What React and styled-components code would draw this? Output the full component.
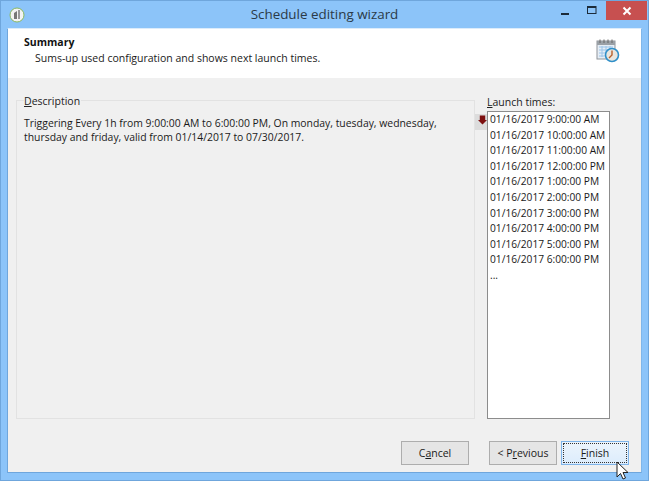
import React from "react";
import styled, { createGlobalStyle } from "styled-components";

const Global = createGlobalStyle`
  html, body { margin: 0; padding: 0; background: #fff; }
  body { width: 669px; height: 501px; overflow: hidden; font-family: "Open Sans", "Noto Sans", sans-serif; }
`;
const Win = styled.div`
  box-sizing: border-box; width: 649px; height: 481px; background: #8cc4f9;
  border: 1px solid #6fa6dc; display: flex; flex-direction: column; padding: 0 6px 7px 6px;
`;
const TitleBar = styled.div`
  height: 27px; flex: none; display: flex; align-items: flex-start; position: relative; margin: 0 -5px 0 0;
`;
const AppIcon = styled.svg`
  width: 16px; height: 16px; margin: 6px 0 0 2px; flex: none;
`;
const Title = styled.div`
  flex: 1; text-align: center; font-size: 13.4px; line-height: 20px; margin: 3px 23px 0 0; color: #2b3a47;
`;
const WinBtns = styled.div`
  position: absolute; right: 0; top: 0; display: flex; align-items: flex-start;
`;
const CtlBtn = styled.div`
  width: 27px; height: 19px; display: flex; align-items: center; justify-content: center;
`;
const CloseBtn = styled.div`
  width: 41px; height: 19px; margin-left: 1px; background: #c75050; color: #fff; display: flex; align-items: center; justify-content: center;
`;
const Client = styled.div`
  flex: 1; display: flex; flex-direction: column; background: #f0f0f0; border: 1px solid #6fa6dc; border-top-color: #dcecfb; min-height: 0; border-right-color:#7fb6ea;
`;
const Header = styled.div`
  height: 49px; flex: none; background: #fff; display: flex; justify-content: space-between; padding: 6px 21px 0 16px; box-sizing: border-box;
`;
const HeadTitle = styled.div`
  font-size: 10.5px; font-weight: 700; line-height: 15px; color: #111;
`;
const HeadSub = styled.div`
  font-size: 10.5px; line-height: 17px; margin-left: 11px; color: #1a1a1a;
`;
const Body = styled.div`
  flex: 1; display: flex; padding: 14px 31px 0 8px; min-height: 0; align-items: flex-start;
`;
const Group = styled.fieldset`
  box-sizing: border-box; width: 459px; height: 327px; margin: 0; padding: 4px 7px 0 7px; flex: none;
  border: 1px solid #e2e2e2; border-radius: 0;
`;
const Legend = styled.legend`
  font-size: 10.5px; line-height: 14px; padding: 2px 1px 0 0; color: #222;
`;
const Desc = styled.div`
  font-size: 10.4px; line-height: 14px; color: #1a1a1a; width: 430px; margin-top: 4px;
`;
const Grip = styled.div`
  width: 12px; flex: none; height: 16px; margin-top: 22px; background: #dcdcdc; display: flex; padding-top: 1px; box-sizing: border-box; justify-content: flex-start;
`;
const Side = styled.div`
  width: 123px; flex: none; margin: 3px 0 0 0;
`;
const SideLabel = styled.div`
  font-size: 10.5px; line-height: 14px; height: 16px; color: #222;
`;
const List = styled.div`
  box-sizing: border-box; height: 308px; border: 1px solid #8c8c8c; background: #fff; padding: 0 0 0 2px;
`;
const Item = styled.div`
  font-size: 10.2px; line-height: 15.6px; height: 15.6px; color: #1a1a1a; white-space: nowrap;
`;
const Footer = styled.div`
  flex: none; height: 54px; display: flex; justify-content: flex-end; align-items: flex-start; padding: 23px 12px 0 0; box-sizing: border-box;
`;
const Btn = styled.div`
  box-sizing: border-box; width: 68px; height: 24px; border: 1px solid ${p => p.$primary ? "#7eb4ea" : "#adadad"};
  background: ${p => p.$primary ? "linear-gradient(#ecf4fc,#dcecfc)" : "#e5e5e5"};
  margin-left: ${p => p.$gap || 0}px; font-size: 10.5px; color: #1a1a1a;
  display: flex; align-items: center; justify-content: center; position: relative;
  ${p => p.$primary && `&::before { content: ""; position: absolute; inset: 1px; border: 1px dotted #333; }`}
`;
const U = styled.span` text-decoration: underline; text-underline-offset: 1px; `;
const Cursor = styled.svg`
  position: absolute; left: 54px; top: 19px; width: 12px; height: 19px; z-index: 2;
`;
const ArrowIcon = styled.svg`
  margin-left: 3px; width: 10px; height: 10px;
`;
const CalendarIcon = styled.svg`
  width: 24px; height: 24px; margin-top: 4px;
`;

const times = ["01/16/2017 9:00:00 AM","01/16/2017 10:00:00 AM","01/16/2017 11:00:00 AM","01/16/2017 12:00:00 PM","01/16/2017 1:00:00 PM","01/16/2017 2:00:00 PM","01/16/2017 3:00:00 PM","01/16/2017 4:00:00 PM","01/16/2017 5:00:00 PM","01/16/2017 6:00:00 PM","..."];

export default function App() {
  return (
    <>
      <Global />
      <Win>
        <TitleBar>
          <AppIcon viewBox="0 0 16 16">
            <circle cx="8" cy="8" r="7" fill="#f3f3f3" stroke="#8ab860" strokeWidth="1" />
            <path d="M5 12V6L8 4V12Z" fill="#777" />
            <rect x="9" y="3" width="2" height="9" fill="#999" />
          </AppIcon>
          <Title>Schedule editing wizard</Title>
          <WinBtns>
            <CtlBtn>
              <svg width="10" height="10" viewBox="0 0 10 10"><rect x="1" y="7" width="8" height="2" fill="#1c2b3a" /></svg>
            </CtlBtn>
            <CtlBtn>
              <svg width="10" height="9" viewBox="0 0 10 9"><rect x="0.5" y="0.5" width="8.5" height="7" fill="none" stroke="#1c2b3a" /><rect x="0" y="0" width="9" height="2" fill="#1c2b3a" /></svg>
            </CtlBtn>
            <CloseBtn>
              <svg width="10" height="10" viewBox="0 0 10 10"><path d="M1.5 1.5 L8.5 8.5 M8.5 1.5 L1.5 8.5" stroke="#fff" strokeWidth="2" /></svg>
            </CloseBtn>
          </WinBtns>
        </TitleBar>
        <Client>
          <Header>
            <div>
              <HeadTitle>Summary</HeadTitle>
              <HeadSub>Sums-up used configuration and shows next launch times.</HeadSub>
            </div>
            <CalendarIcon viewBox="0 0 24 24">
              <rect x="1" y="2" width="18" height="18" fill="#e6eef6" stroke="#8f9499" />
              <rect x="1" y="2" width="18" height="4" fill="#9aa0a6" />
              <path d="M4 0.5V4M8 0.5V4M12 0.5V4M16 0.5V4" stroke="#666" />
              <path d="M3 8h14M3 11h14M3 14h14M3 17h14M6 7v11M10 7v11M14 7v11" stroke="#9cc4e8" />
              <circle cx="16" cy="16" r="6.5" fill="#e9e6df" stroke="#2f8fc8" strokeWidth="1.6" />
              <path d="M16 11.5V16L13 19" stroke="#b8602c" strokeWidth="1.4" fill="none" />
            </CalendarIcon>
          </Header>
          <Body>
            <Group>
              <Legend><U>D</U>escription</Legend>
              <Desc>Triggering Every 1h from 9:00:00 AM to 6:00:00 PM, On monday, tuesday, wednesday, thursday and friday, valid from 01/14/2017 to 07/30/2017.</Desc>
            </Group>
            <Grip>
              <ArrowIcon viewBox="0 0 10 10"><path d="M2 0H8V5H10L5 10L0 5H2Z" fill="#7d1010" /></ArrowIcon>
            </Grip>
            <Side>
              <SideLabel><U>L</U>aunch times:</SideLabel>
              <List>
                {times.map(t => <Item key={t}>{t}</Item>)}
              </List>
            </Side>
          </Body>
          <Footer>
            <Btn>C<U>a</U>ncel</Btn>
            <Btn $gap={20}>&lt; P<U>r</U>evious</Btn>
            <Btn $gap={4} $primary>
              <span><U>F</U>inish</span>
              <Cursor viewBox="0 0 12 19">
                <path d="M1 1V16L4.5 12.5L7 18L9.5 17L7 11.5H12Z" fill="#fff" stroke="#222" strokeWidth="1" />
              </Cursor>
            </Btn>
          </Footer>
        </Client>
      </Win>
    </>
  );
}
